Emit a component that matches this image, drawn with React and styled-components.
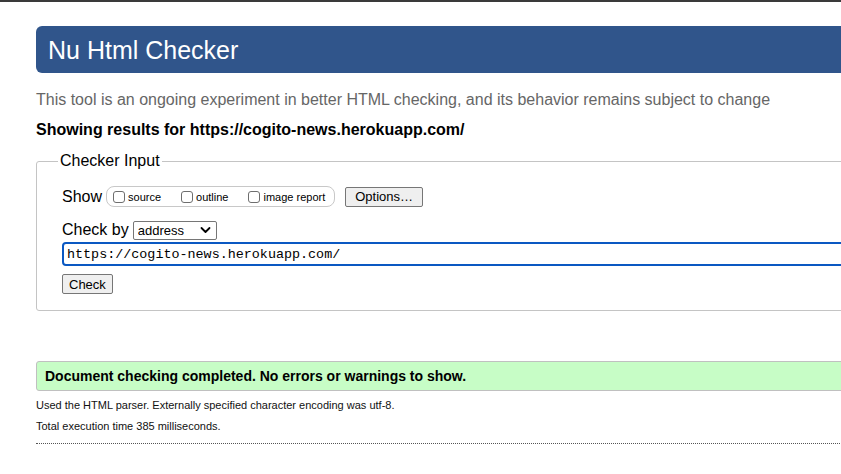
import React from "react";
import styled, { createGlobalStyle } from "styled-components";

//Global
const GlobalStyle = createGlobalStyle`
  html, body {
    margin: 0;
    padding: 0;
    background: #fff;
    overflow: hidden;
  }
  body {
    font-family: "Liberation Sans", Arial, Helvetica, sans-serif;
    color: #000;
  }
`;

const App = () => {
  return (
    <>
      <GlobalStyle />
      <TopRule />
      <Page>
        <Header>
          <h1>Nu Html Checker</h1>
        </Header>
        <Intro>
          This tool is an ongoing experiment in better HTML checking, and its
          behavior remains subject to change
        </Intro>
        <ResultsFor>Showing results for https://cogito-news.herokuapp.com/</ResultsFor>

        <InputSet>
          <legend>Checker Input</legend>
          <Row>
            <span>Show</span>
            <OptionGroup>
              <Option>
                <Box type="checkbox" />
                source
              </Option>
              <Option>
                <Box type="checkbox" />
                outline
              </Option>
              <Option>
                <Box type="checkbox" />
                image report
              </Option>
            </OptionGroup>
            <Button $ml="10px" $px="9px">Options…</Button>
          </Row>
          <Row $mt="13px">
            <span>Check by</span>
            <SelectWrap>
              <Select defaultValue="address">
                <option value="address">address</option>
                <option value="file">file upload</option>
                <option value="text">text input</option>
              </Select>
              <svg width="11" height="8" viewBox="0 0 11 8">
                <path d="M1.5 2 L5.5 6 L9.5 2" fill="none" stroke="#000" strokeWidth="1.8" strokeLinecap="round" strokeLinejoin="round" />
              </svg>
            </SelectWrap>
          </Row>
          <UrlField defaultValue="https://cogito-news.herokuapp.com/" />
          <Button $mt="8px">Check</Button>
        </InputSet>

        <Success>Document checking completed. No errors or warnings to show.</Success>
        <Note>Used the HTML parser. Externally specified character encoding was utf-8.</Note>
        <Note>Total execution time 385 milliseconds.</Note>
        <Dotted />
      </Page>
    </>
  );
};

const TopRule = styled.div`
  height: 2px;
  background: #3a3a3a;
`;

const Page = styled.div`
  width: 1000px;
  padding: 24px 0 0 36px;
`;

const Header = styled.div`
  background: #30558b;
  border-radius: 6px;
  height: 47px;
  display: flex;
  align-items: center;
  padding-left: 12px;
  h1 {
    margin: 0;
    color: #fff;
    font-weight: normal;
    font-size: 25px;
    line-height: 28px;
  }
`;

const Intro = styled.p`
  margin: 18px 0 0;
  font-size: 16px;
  line-height: 18px;
  color: #666;
`;

const ResultsFor = styled.p`
  margin: 12px 0 0;
  font-size: 16px;
  line-height: 18px;
  font-weight: bold;
`;

const InputSet = styled.fieldset`
  margin: 13px 0 0;
  padding: 16px 25px 16px;
  border: 1px solid #c4c4c4;
  border-radius: 3px;
  legend {
    font-size: 16px;
    padding: 0 2px;
    margin-left: -4px;
    line-height: 18px;
  }
`;

const Row = styled.div`
  display: flex;
  align-items: center;
  font-size: 16px;
  margin-top: ${(p) => p.$mt || "0"};
  span {
    margin-right: 4px;
  }
`;

const OptionGroup = styled.div`
  display: flex;
  align-items: center;
  gap: 20px;
  height: 19px;
  padding: 0 9px 0 6px;
  border: 1px solid #c8c8c8;
  border-radius: 8px;
`;

const Option = styled.label`
  display: flex;
  align-items: center;
  font-size: 11px;
  gap: 3px;
`;

const Box = styled.input`
  appearance: none;
  margin: 0;
  width: 12px;
  height: 12px;
  border: 1px solid #6e6e6e;
  border-radius: 3px;
  background: #fff;
`;

const Button = styled.button`
  display: block;
  font-family: "Liberation Sans", Arial, sans-serif;
  font-size: 13px;
  height: 20px;
  padding: 0 ${(p) => p.$px || "6px"};
  margin-left: ${(p) => p.$ml || "0"};
  margin-top: ${(p) => p.$mt || "0"};
  background: #efefef;
  border: 1px solid #767676;
  border-radius: 2px;
  color: #000;
`;

const SelectWrap = styled.div`
  position: relative;
  display: flex;
  svg {
    position: absolute;
    right: 6px;
    top: 6px;
    pointer-events: none;
  }
`;

const Select = styled.select`
  appearance: none;
  width: 84px;
  height: 19px;
  margin-top: 1px;
  padding: 0 0 0 4px;
  font-family: "Liberation Sans", Arial, sans-serif;
  font-size: 13px;
  background: #fff;
  border: 1px solid #767676;
  border-radius: 2px;
  color: #000;
`;

const UrlField = styled.input`
  display: block;
  box-sizing: border-box;
  width: 100%;
  height: 24px;
  margin-top: 2px;
  padding: 0 3px;
  font-family: "Liberation Mono", "Courier New", monospace;
  font-size: 13.4px;
  border: 2px solid #0a58c2;
  border-radius: 4px;
  outline: none;
  color: #000;
`;

const Success = styled.div`
  margin-top: 50px;
  height: 28px;
  display: flex;
  align-items: center;
  padding-left: 8px;
  background: #c7fdc6;
  border: 1px solid #c0c0c0;
  border-radius: 3px;
  font-size: 14px;
  font-weight: bold;
`;

const Note = styled.p`
  margin: 8px 0 0;
  font-size: 11px;
  line-height: 13px;
  color: #111;
`;

const Dotted = styled.div`
  margin-top: 10px;
  border-top: 1px dotted #555;
`;

export default App;
